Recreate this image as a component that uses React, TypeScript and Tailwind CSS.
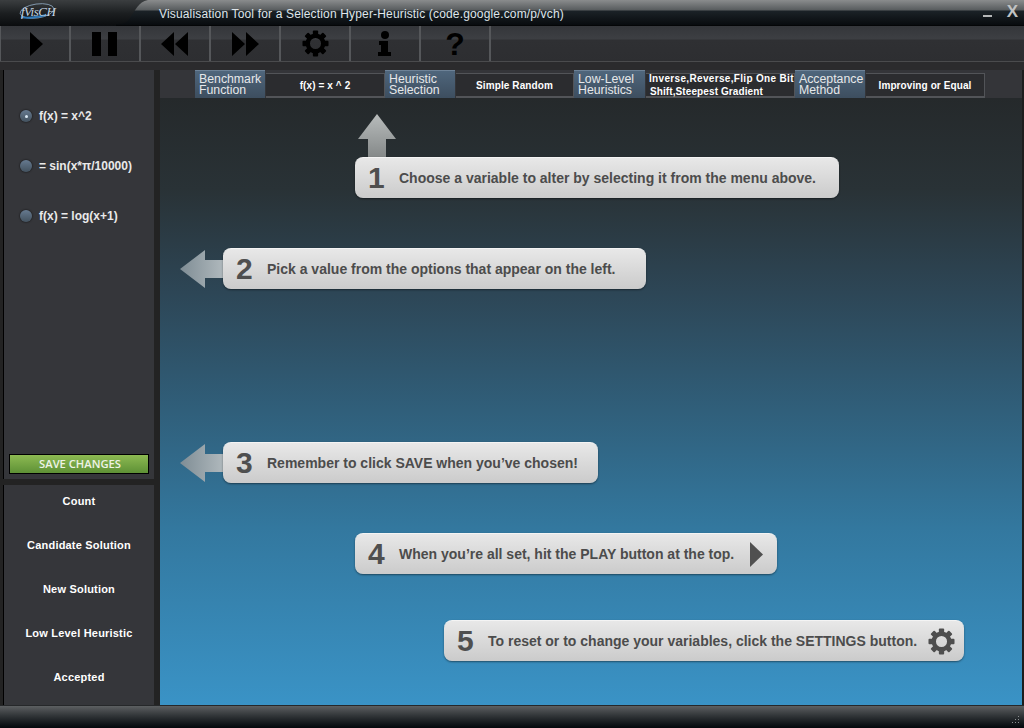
import React from 'react';

const Gear = ({ size, color }: { size: number; color: string }) => (
  <svg width={size} height={size} viewBox="0 0 28 28">
    <circle cx="14" cy="14" r="8" fill="none" stroke={color} strokeWidth="4.5" />
    {[0, 45, 90, 135, 180, 225, 270, 315].map((a) => (
      <rect key={a} x="11.25" y="0.5" width="5.5" height="6" rx="1" fill={color} transform={`rotate(${a} 14 14)`} />
    ))}
  </svg>
);

const ToolbarButton = ({ children }: { children: React.ReactNode }) => (
  <div className="w-[70px] h-full flex items-center justify-center border-r-2 border-[#55575a]">{children}</div>
);

const HeaderTab = ({ lines, className }: { lines: string[]; className: string }) => (
  <div className={`h-[28px] flex flex-col justify-start pt-[3px] bg-gradient-to-b from-[#4f667c] to-[#3d4e5f] border-t border-[#6d8297] text-[12.3px] leading-[11px] text-[#e6e8ea] pl-[4px] whitespace-nowrap ${className}`}>
    {lines.map((l) => (
      <span key={l}>{l}</span>
    ))}
  </div>
);

const ValueTab = ({ className, children }: { className: string; children: React.ReactNode }) => (
  <div className={`h-[25px] mt-[3px] flex flex-col items-center justify-center bg-[#2b2c2f] border-t border-r border-b-2 border-[#525458] text-[10px] tracking-[0.1px] font-bold text-white ${className}`}>
    {children}
  </div>
);

const LeftArrow = () => (
  <svg width="44" height="38" viewBox="0 0 44 38" className="shrink-0">
    <defs>
      <linearGradient id="leftArrow" x1="0" x2="1" y1="0" y2="0">
        <stop offset="0" stopColor="#7f8d95" />
        <stop offset="1" stopColor="#b0b9bd" />
      </linearGradient>
    </defs>
    <path d="M0 19 L25 0 V10 H44 V28 H25 V38 Z" fill="url(#leftArrow)" />
  </svg>
);

const Callout = ({ n, className, children }: { n: number; className: string; children: React.ReactNode }) => (
  <div className={`h-[41px] flex items-center pl-[13px] rounded-[8px] bg-gradient-to-b from-[#e8e8e8] to-[#cbcbcb] border-t border-[#f4f4f4] shadow-[0_1px_2px_rgba(0,0,0,0.45)] ${className}`}>
    <span className="w-[31px] text-[30px] font-bold text-[#4f4f4f] leading-none">{n}</span>
    {children}
  </div>
);

const CalloutText = ({ children }: { children: React.ReactNode }) => (
  <span className="text-[14px] font-bold text-[#4c4c4c] whitespace-nowrap">{children}</span>
);

export default function App() {
  return (
    <div className="w-[1024px] h-[728px] flex flex-col overflow-hidden bg-[#232323] font-['Liberation_Sans',Arial,sans-serif]">
      {/* title bar */}
      <div className="h-[26px] flex items-stretch bg-[linear-gradient(#8a8c8d_0,#585c5e_10px,#1b2227_11px,#080b0e_25px,#000_26px)]">
        <div className="relative w-[150px] h-full">
          <svg width="150" height="26" viewBox="0 0 150 26" className="absolute inset-0">
            <defs>
              <linearGradient id="logoBar" x1="0" x2="0" y1="0" y2="1">
                <stop offset="0" stopColor="#3b3e40" />
                <stop offset="0.5" stopColor="#1c1f21" />
                <stop offset="1" stopColor="#0a0c0e" />
              </linearGradient>
            </defs>
            <path d="M0 0 H148 C138 2 136 10 130 18 C127 23 122 24 116 24 L116 26 H0 Z" fill="url(#logoBar)" />
            <ellipse cx="37" cy="11" rx="17" ry="7" fill="none" stroke="#8fa9c0" strokeWidth="0.8" transform="rotate(-8 37 11)" />
            <path d="M21 17 C28 19 38 17 46 15" fill="none" stroke="#2f78b8" strokeWidth="2" />
          </svg>
          <span className="absolute left-[21px] top-[5px] text-[13px] italic font-['Liberation_Serif',serif] text-[#c4d4e2] leading-none tracking-[-0.5px]">fVisCH</span>
        </div>
        <div className="ml-[9px] pt-[6px] text-[12px] leading-[16px] text-[#dfe5ea] tracking-[0.16px] whitespace-nowrap">
          Visualisation Tool for a Selection Hyper-Heuristic (code.google.com/p/vch)
        </div>
        <div className="ml-auto flex items-start">
          <div className="w-[9px] h-[2px] bg-[#b5b7b8] mt-[15px]" />
          <span className="ml-[15px] mr-[6px] mt-[3px] text-[17px] font-bold leading-[17px] text-[#c0c2c3]">X</span>
        </div>
      </div>

      {/* toolbar */}
      <div className="h-[36px] flex items-stretch bg-[linear-gradient(#34363a_0,#3d3f43_13px,#2f3033_14px,#2d2e31_100%)] border-b border-[#4a4b4d]">
        <div className="w-[1px] bg-[#55575a]" />
        <ToolbarButton>
          <svg width="13" height="24" viewBox="0 0 13 24" className="ml-[2px]"><path d="M0 0 L13 12 L0 24 Z" fill="#000" /></svg>
        </ToolbarButton>
        <ToolbarButton>
          <svg width="26" height="24" viewBox="0 0 26 24"><path d="M0 0 H9 V24 H0 Z M16 0 H25 V24 H16 Z" fill="#000" /></svg>
        </ToolbarButton>
        <ToolbarButton>
          <svg width="27" height="24" viewBox="0 0 27 24" className="mr-[2px]"><path d="M13 0 V24 L0 12 Z M27 0 V24 L14 12 Z" fill="#000" /></svg>
        </ToolbarButton>
        <ToolbarButton>
          <svg width="27" height="24" viewBox="0 0 27 24"><path d="M0 0 V24 L13 12 Z M14 0 V24 L27 12 Z" fill="#000" /></svg>
        </ToolbarButton>
        <ToolbarButton>
          <Gear size={27} color="#000" />
        </ToolbarButton>
        <ToolbarButton>
          <svg width="14" height="25" viewBox="0 0 14 25">
            <circle cx="7" cy="4" r="4" fill="#000" />
            <path d="M1 10 H10 V21 H13 V25 H0 V21 H3 V14 H1 Z" fill="#000" />
          </svg>
        </ToolbarButton>
        <ToolbarButton>
          <span className="text-[32px] font-bold leading-none text-black">?</span>
        </ToolbarButton>
      </div>
      <div className="h-[8px] bg-[#2b2b2d]" />

      {/* body */}
      <div className="h-[635px] flex">
        <div className="w-[160px] flex flex-col pl-[3px] pr-[6px] bg-[#232323]">
          <div className="h-[409px] flex flex-col border-l border-black bg-[#35363a] pt-[21px]">
            {['f(x) = x^2', '= sin(x*π/10000)', 'f(x) = log(x+1)'].map((label, i) => (
              <div key={label} className="h-[50px] flex items-center">
                <div className="ml-[16px] w-[12px] h-[12px] rounded-full bg-gradient-to-b from-[#667a90] to-[#43525f] shadow-[0_0_2px_rgba(0,0,0,0.9)] flex items-center justify-center">
                  {i === 0 && <div className="w-[3px] h-[3px] rounded-full bg-[#dbe9f5]" />}
                </div>
                <span className="ml-[7px] text-[12px] font-bold text-[#e9e9e9] whitespace-nowrap">{label}</span>
              </div>
            ))}
            <div className="mt-auto mb-[5px] ml-[5px] w-[140px] h-[20px] flex items-center justify-center pl-[2px] bg-gradient-to-b from-[#8dba52] to-[#5e9136] border border-black text-[11.2px] font-semibold font-['Open_Sans',sans-serif] text-[#eef3e6]">
              SAVE CHANGES
            </div>
          </div>
          <div className="h-[220px] mt-[6px] flex flex-col gap-[20px] pt-[4px] border-l border-black bg-[#35363a]">
            {['Count', 'Candidate Solution', 'New Solution', 'Low Level Heuristic', 'Accepted'].map((label) => (
              <div key={label} className="h-[24px] flex items-center justify-center text-[11px] font-bold tracking-[0.2px] text-white">
                {label}
              </div>
            ))}
          </div>
        </div>

        <div className="w-[862px] flex flex-col">
          {/* tab row */}
          <div className="h-[28px] flex items-start pl-[35px] bg-[#343539]">
            <HeaderTab lines={['Benchmark', 'Function']} className="w-[70px]" />
            <ValueTab className="w-[119px] ml-[1px]">f(x) = x ^ 2</ValueTab>
            <HeaderTab lines={['Heuristic', 'Selection']} className="w-[70px]" />
            <ValueTab className="w-[118px] ml-[1px]">Simple Random</ValueTab>
            <HeaderTab lines={['Low-Level', 'Heuristics']} className="w-[71px]" />
            <ValueTab className="w-[149px] ml-[1px] leading-[13px] whitespace-nowrap">
              <span className="self-start pl-[3px] tracking-[0.33px]">Inverse,Reverse,Flip One Bit</span>
              <span className="self-start pl-[4px]">Shift,Steepest Gradient</span>
            </ValueTab>
            <HeaderTab lines={['Acceptance', 'Method']} className="w-[70px]" />
            <ValueTab className="w-[119px] ml-[1px]">Improving or Equal</ValueTab>
          </div>

          {/* instructions */}
          <div className="flex-1 flex flex-col bg-[linear-gradient(180deg,#25292b_0%,#293236_15%,#2d4656_32%,#33789f_71%,#3a93c6_100%)]">
            <div className="flex flex-col pl-[195px] pt-[16px]">
              <svg width="38" height="43" viewBox="0 0 38 43" className="ml-[3px]">
                <defs>
                  <linearGradient id="upArrow" x1="0" x2="0" y1="0" y2="1">
                    <stop offset="0" stopColor="#b8bcbc" />
                    <stop offset="1" stopColor="#858989" />
                  </linearGradient>
                </defs>
                <path d="M19 0 L38 25 H28 V43 H10 V25 H0 Z" fill="url(#upArrow)" />
              </svg>
              <Callout n={1} className="w-[484px]">
                <CalloutText>Choose a variable to alter by selecting it from the menu above.</CalloutText>
              </Callout>
            </div>
            <div className="flex items-center pl-[20px] mt-[50px]">
              <LeftArrow />
              <Callout n={2} className="w-[423px] -ml-[1px]">
                <CalloutText>Pick a value from the options that appear on the left.</CalloutText>
              </Callout>
            </div>
            <div className="flex items-center pl-[20px] mt-[153px]">
              <LeftArrow />
              <Callout n={3} className="w-[375px] -ml-[1px]">
                <CalloutText>Remember to click SAVE when you’ve chosen!</CalloutText>
              </Callout>
            </div>
            <div className="pl-[195px] mt-[50px]">
              <Callout n={4} className="w-[422px]">
                <CalloutText>When you’re all set, hit the PLAY button at the top.</CalloutText>
                <svg width="13" height="25" viewBox="0 0 13 25" className="ml-auto mr-[14px]">
                  <path d="M0 0 L13 12.5 L0 25 Z" fill="#505050" />
                </svg>
              </Callout>
            </div>
            <div className="pl-[284px] mt-[46px]">
              <Callout n={5} className="w-[520px]">
                <CalloutText>To reset or to change your variables, click the SETTINGS button.</CalloutText>
                <div className="ml-auto mr-[9px]">
                  <Gear size={27} color="#4e4e4e" />
                </div>
              </Callout>
            </div>
          </div>
        </div>
        <div className="w-[2px] bg-[#1d1d1d]" />
      </div>

      {/* status bar */}
      <div className="relative h-[23px] bg-gradient-to-b from-[#5d6062] via-[#2c3033] to-[#04080c] border-t border-[#26282a]">
        <svg width="10" height="9" viewBox="0 0 10 9" className="absolute right-[4px] bottom-[3px]">
          <path d="M8 0 h1 v1 h-1 Z M5 3 h1 v1 h-1 Z M8 3 h1 v1 h-1 Z M2 6 h1 v1 h-1 Z M5 6 h1 v1 h-1 Z M8 6 h1 v1 h-1 Z" fill="#8b8f92" />
        </svg>
      </div>
    </div>
  );
}
